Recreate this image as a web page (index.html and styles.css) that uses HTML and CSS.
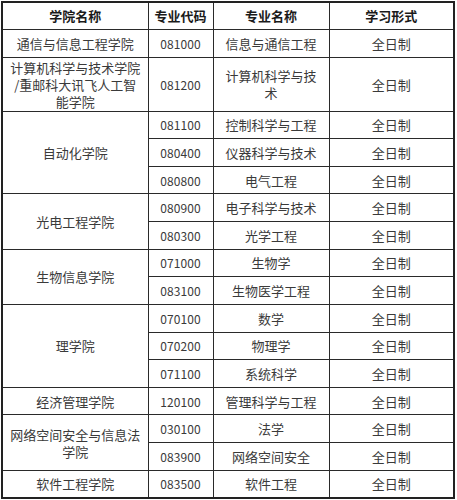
FILE: index.html
```html
<!DOCTYPE html>
<html lang="zh-CN">
<head>
<meta charset="utf-8">
<title>专业目录</title>
<link rel="stylesheet" href="styles.css">
</head>
<body>
<table class="majors">
  <colgroup>
    <col class="c-school">
    <col class="c-code">
    <col class="c-name">
    <col class="c-mode">
  </colgroup>
  <thead>
    <tr class="head">
      <th>学院名称</th>
      <th>专业代码</th>
      <th>专业名称</th>
      <th>学习形式</th>
    </tr>
  </thead>
  <tbody>
    <tr class="r28">
      <td class="school">通信与信息工程学院</td>
      <td class="code">081000</td>
      <td class="name">信息与通信工程</td>
      <td>全日制</td>
    </tr>
    <tr class="tall">
      <td class="school">计算机科学与技术学院<wbr>/重邮科大讯飞人工智能学院</td>
      <td class="code">081200</td>
      <td class="name">计算机科学与技术</td>
      <td>全日制</td>
    </tr>
    <tr class="row">
      <td class="school" rowspan="3">自动化学院</td>
      <td class="code">081100</td>
      <td class="name">控制科学与工程</td>
      <td>全日制</td>
    </tr>
    <tr class="row">
      <td class="code">080400</td>
      <td class="name">仪器科学与技术</td>
      <td>全日制</td>
    </tr>
    <tr class="row">
      <td class="code">080800</td>
      <td class="name">电气工程</td>
      <td>全日制</td>
    </tr>
    <tr class="row">
      <td class="school" rowspan="2">光电工程学院</td>
      <td class="code">080900</td>
      <td class="name">电子科学与技术</td>
      <td>全日制</td>
    </tr>
    <tr class="row">
      <td class="code">080300</td>
      <td class="name">光学工程</td>
      <td>全日制</td>
    </tr>
    <tr class="row">
      <td class="school" rowspan="2">生物信息学院</td>
      <td class="code">071000</td>
      <td class="name">生物学</td>
      <td>全日制</td>
    </tr>
    <tr class="row">
      <td class="code">083100</td>
      <td class="name">生物医学工程</td>
      <td>全日制</td>
    </tr>
    <tr class="row">
      <td class="school" rowspan="3">理学院</td>
      <td class="code">070100</td>
      <td class="name">数学</td>
      <td>全日制</td>
    </tr>
    <tr class="row">
      <td class="code">070200</td>
      <td class="name">物理学</td>
      <td>全日制</td>
    </tr>
    <tr class="row">
      <td class="code">071100</td>
      <td class="name">系统科学</td>
      <td>全日制</td>
    </tr>
    <tr class="row">
      <td class="school">经济管理学院</td>
      <td class="code">120100</td>
      <td class="name">管理科学与工程</td>
      <td>全日制</td>
    </tr>
    <tr class="row">
      <td class="school" rowspan="2">网络空间安全与信息法学院</td>
      <td class="code">030100</td>
      <td class="name">法学</td>
      <td>全日制</td>
    </tr>
    <tr class="row">
      <td class="code">083900</td>
      <td class="name">网络空间安全</td>
      <td>全日制</td>
    </tr>
    <tr class="row">
      <td class="school">软件工程学院</td>
      <td class="code">083500</td>
      <td class="name">软件工程</td>
      <td>全日制</td>
    </tr>
  </tbody>
</table>
</body>
</html>
```

FILE: styles.css
```css
html, body {
  margin: 0;
  padding: 0;
  background: #ffffff;
}

body {
  padding: 1px 0 0 1px;
  font-family: "Noto Sans CJK SC", "Noto Sans", sans-serif;
  font-size: 13px;
  color: #3a3a3a;
}

.majors {
  border-collapse: collapse;
  table-layout: fixed;
  width: 454px;
  border: 2px solid #222;
}

.c-school { width: 146px; }
.c-code { width: 65px; }
.c-name { width: 116px; }
.c-mode { width: 125px; }

.majors th,
.majors td {
  border: 1px solid #2a2a2a;
  text-align: center;
  vertical-align: middle;
  padding: 0 4px;
  line-height: 17px;
  font-weight: 400;
}

.majors th {
  font-weight: 700;
  color: #1a1a1a;
}

.head { height: 27px; }
.r28 { height: 28px; }
.tall { height: 54px; }
.row { height: 27.64px; }

.majors td.school {
  padding: 0 6px;
}

.majors td.name {
  padding: 0 8px;
}

.majors td.code {
  font-size: 12px;
  letter-spacing: 0.1px;
}
```
